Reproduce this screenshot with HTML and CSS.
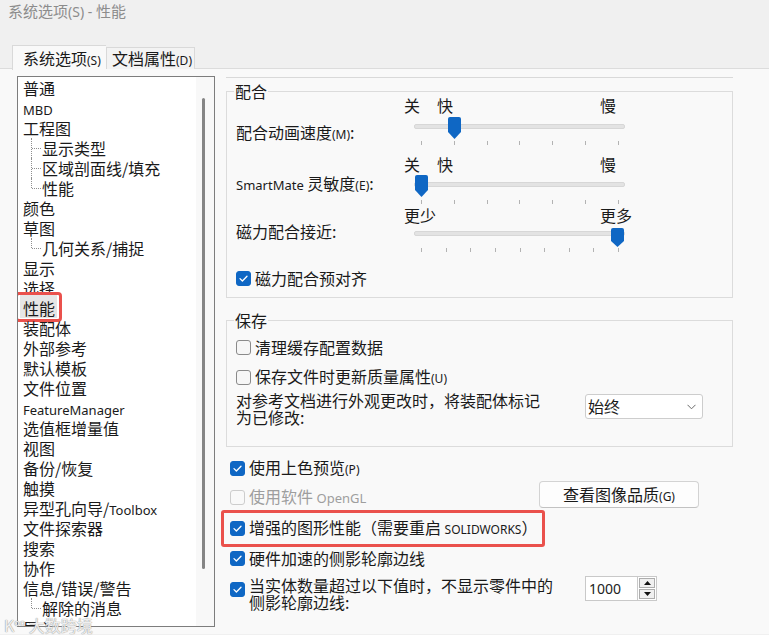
FILE: index.html
```html
<!DOCTYPE html>
<html lang="zh-CN">
<head>
<meta charset="utf-8">
<title>系统选项(S) - 性能</title>
<link rel="stylesheet" href="styles.css">
</head>
<body>
<div class="title">系统选项<span class="tl">(S) - </span>性能</div>
<div class="tabs">
  <div class="tab active">系统选项<span class="acc">(S)</span></div>
  <div class="tab">文档属性<span class="acc">(D)</span></div>
</div>
<div class="page">
  <div class="tree">
    <ul class="tree-list">
      <li class="item">普通</li>
      <li class="item"><span class="lt">MBD</span></li>
      <li class="item">工程图</li>
      <li class="item child">显示类型</li>
      <li class="item child">区域剖面线/填充</li>
      <li class="item child last">性能</li>
      <li class="item">颜色</li>
      <li class="item">草图</li>
      <li class="item child last">几何关系/捕捉</li>
      <li class="item">显示</li>
      <li class="item">选择</li>
      <li class="item"><span class="selected">性能</span></li>
      <li class="item">装配体</li>
      <li class="item">外部参考</li>
      <li class="item">默认模板</li>
      <li class="item">文件位置</li>
      <li class="item"><span class="lt">FeatureManager</span></li>
      <li class="item">选值框增量值</li>
      <li class="item">视图</li>
      <li class="item">备份/恢复</li>
      <li class="item">触摸</li>
      <li class="item">异型孔向导/<span class="lt">Toolbox</span></li>
      <li class="item">文件探索器</li>
      <li class="item">搜索</li>
      <li class="item">协作</li>
      <li class="item">信息/错误/警告</li>
      <li class="item child last">解除的消息</li>
      <li class="item">导入</li>
    </ul>
    <div class="scrollbar"><div class="sthumb"></div></div>
  </div>

  <div class="content">
    <div class="topline"></div>

    <div class="group group-mate">
      <div class="legend">配合</div>

      <div class="srow">
        <div class="srow-label lbl-1">配合动画速度<span class="acc">(M)</span>:</div>
        <div class="slider">
          <div class="slabels"><span>关</span><span class="fast">快</span><span class="slow">慢</span></div>
          <div class="strack-wrap w1">
            <div class="track"></div>
            <svg class="thumb t1" width="13" height="22" viewBox="0 0 13 22"><path d="M2 0H11A2 2 0 0 1 13 2V15L6.5 22L0 15V2A2 2 0 0 1 2 0Z"/></svg>
          </div>
          <div class="ticks t7"><i></i><i></i><i></i><i></i><i></i><i></i><i></i></div>
        </div>
      </div>

      <div class="srow r2">
        <div class="srow-label lbl-2"><span class="lt">SmartMate</span> 灵敏度<span class="acc">(E)</span>:</div>
        <div class="slider">
          <div class="slabels"><span>关</span><span class="fast">快</span><span class="slow">慢</span></div>
          <div class="strack-wrap w2">
            <div class="track"></div>
            <svg class="thumb t2" width="13" height="22" viewBox="0 0 13 22"><path d="M2 0H11A2 2 0 0 1 13 2V15L6.5 22L0 15V2A2 2 0 0 1 2 0Z"/></svg>
          </div>
          <div class="ticks t7 k2"><i></i><i></i><i></i><i></i><i></i><i></i><i></i></div>
        </div>
      </div>

      <div class="srow r3">
        <div class="srow-label lbl-3">磁力配合接近:</div>
        <div class="slider">
          <div class="slabels spread"><span>更少</span><span>更多</span></div>
          <div class="strack-wrap w3">
            <div class="track"></div>
            <svg class="thumb t3" width="13" height="19" viewBox="0 0 13 19"><path d="M2 0H11A2 2 0 0 1 13 2V13L6.5 19L0 13V2A2 2 0 0 1 2 0Z"/></svg>
          </div>
          <div class="ticks"><i></i><i></i><i></i><i></i><i></i><i></i><i></i><i></i><i></i></div>
        </div>
      </div>

      <div class="check-row mate-check">
        <span class="cb checked"><svg width="15" height="15" viewBox="0 0 15 15"><path d="M4 7.6L6.4 10L11 5.2"/></svg></span>
        <span>磁力配合预对齐</span>
      </div>
    </div>

    <div class="group group-save">
      <div class="legend">保存</div>
      <div class="check-row">
        <span class="cb"></span>
        <span>清理缓存配置数据</span>
      </div>
      <div class="check-row save-2">
        <span class="cb"></span>
        <span>保存文件时更新质量属性<span class="acc">(U)</span></span>
      </div>
      <div class="mod-row">
        <div class="mod-label">对参考文档进行外观更改时，将装配体标记<br>为已修改:</div>
        <div class="select"><span>始终</span><svg width="9" height="6" viewBox="0 0 9 6"><path d="M0.5 0.8L4.5 4.8L8.5 0.8"/></svg></div>
      </div>
    </div>

    <div class="opts">
      <div class="check-row opt-1">
        <span class="cb checked"><svg width="15" height="15" viewBox="0 0 15 15"><path d="M4 7.6L6.4 10L11 5.2"/></svg></span>
        <span>使用上色预览<span class="acc">(P)</span></span>
      </div>
      <div class="gl-row">
        <div class="check-row disabled gl-check">
          <span class="cb"></span>
          <span>使用软件 <span class="lt">OpenGL</span></span>
        </div>
        <div class="button">查看图像品质<span class="acc">(G)</span></div>
      </div>
      <div class="mark-box">
        <div class="check-row">
          <span class="cb checked"><svg width="15" height="15" viewBox="0 0 15 15"><path d="M4 7.6L6.4 10L11 5.2"/></svg></span>
          <span>增强的图形性能（需要重启 <span class="lt sm">SOLIDWORKS</span>）</span>
        </div>
      </div>
      <div class="check-row opt-hw">
        <span class="cb checked"><svg width="15" height="15" viewBox="0 0 15 15"><path d="M4 7.6L6.4 10L11 5.2"/></svg></span>
        <span>硬件加速的侧影轮廓边线</span>
      </div>
      <div class="count-row">
        <span class="cb checked"><svg width="15" height="15" viewBox="0 0 15 15"><path d="M4 7.6L6.4 10L11 5.2"/></svg></span>
        <div class="count-label">当实体数量超过以下值时，不显示零件中的<br>侧影轮廓边线:</div>
        <div class="spin">
          <div class="spin-input">1000</div>
          <div class="spin-btns">
            <div class="spin-btn"><svg width="7" height="4" viewBox="0 0 7 4"><path d="M3.5 0L7 4H0Z"/></svg></div>
            <div class="spin-btn"><svg width="7" height="4" viewBox="0 0 7 4"><path d="M0 0H7L3.5 4Z"/></svg></div>
          </div>
        </div>
      </div>
    </div>
  </div>
</div>
<div class="watermark">K<sup>oo</sup> 大数跨境</div>
</body>
</html>
```

FILE: styles.css
```css
* { box-sizing: border-box; }
html, body { margin: 0; padding: 0; }
body {
  width: 769px;
  height: 635px;
  overflow: hidden;
  position: relative;
  background: #f0f0f0;
  font-family: "Noto Sans CJK SC", "Noto Sans", sans-serif;
  font-size: 16px;
  color: #1a1a1a;
}
.lt { font-family: "Noto Sans", "Noto Sans CJK SC", sans-serif; font-size: 13px; }
.lt.sm { font-size: 12px; }
.acc { font-family: "Noto Sans", "Noto Sans CJK SC", sans-serif; font-size: 12px; }

.title {
  height: 22px;
  line-height: 22px;
  padding-left: 8px;
  color: #8c8c8c;
  font-size: 15px;
}
.title .tl { font-family: "Noto Sans", sans-serif; font-size: 14px; }

.tabs {
  display: flex;
  align-items: flex-start;
  margin-top: 23px;
  padding-left: 12px;
  height: 24px;
  margin-bottom: -1px;
  position: relative;
  z-index: 1;
}
.tab {
  height: 22px;
  margin-top: 2px;
  line-height: 21px;
  border: 1px solid #d9d9d9;
  border-bottom: none;
  background: #f3f3f3;
  padding-left: 5px;
  width: 89px;
  white-space: nowrap;
}
.tab.active {
  margin-top: 0;
  height: 25px;
  line-height: 24px;
  width: 94px;
  padding-left: 10px;
  background: #f9f9f9;
  border-right: none;
}

.page {
  height: 566px;
  background: #f9f9f9;
  border-top: 1px solid #dcdcdc;
  display: flex;
  align-items: flex-start;
  padding: 7px 0 0 17px;
}

/* tree */
.tree {
  width: 198px;
  height: 551px;
  border: 1px solid #7d7d7d;
  background: #fff;
  display: flex;
  overflow: hidden;
}
.tree-list {
  list-style: none;
  margin: 0;
  padding: 1px 0 0 5px;
  flex: 1;
}
.item {
  height: 20px;
  line-height: 20px;
  white-space: nowrap;
  position: relative;
}
.item.child { padding-left: 19px; }
.item.child::before {
  content: "";
  position: absolute;
  left: 8px;
  top: 0;
  bottom: 0;
  border-left: 1px dotted #8f8f8f;
}
.item.child.last::before { bottom: 50%; }
.item.child::after {
  content: "";
  position: absolute;
  left: 9px;
  top: 50%;
  width: 9px;
  border-top: 1px dotted #8f8f8f;
}
.selected {
  display: inline-block;
  vertical-align: top;
  position: relative;
  margin: -3px 0 0 -3px;
  padding: 3px 2px 0 3px;
  height: 23px;
  line-height: 20px;
  background: #e6e6e6;
}
.selected::after {
  content: "";
  position: absolute;
  left: -5px;
  right: -5px;
  top: -3px;
  bottom: -4px;
  border: 3px solid #ea514c;
  border-radius: 4px;
}
.scrollbar {
  width: 18px;
  background: #f8f8f8;
}
.sthumb {
  width: 3px;
  height: 471px;
  margin: 21px 0 0 6px;
  background: #858585;
  border-radius: 2px;
}

/* content */
.content {
  width: 519px;
  margin-left: 6px;
}
.topline {
  margin: 1px 0 0 5px;
  width: 507px;
  border-top: 1px solid #d9d9d9;
}
.group {
  margin-left: 5px;
  width: 507px;
  border: 1px solid #dcdcdc;
  position: relative;
  padding-left: 9px;
}
.legend {
  position: absolute;
  top: -11px;
  left: 7px;
  padding: 0 1px;
  line-height: 20px;
  background: #f9f9f9;
}
.group-mate {
  margin-top: 13px;
  padding-top: 3px;
  padding-bottom: 9px;
}
.srow { display: flex; align-items: flex-start; }
.srow.r2 { margin-top: 9px; }
.srow.r3 { margin-top: 1px; }
.srow-label { width: 168px; line-height: 20px; white-space: nowrap; }
.lbl-1 { margin-top: 27px; }
.lbl-2 { margin-top: 19px; }
.lbl-3 { margin-top: 16px; }

.slider { width: 228px; }
.slabels {
  display: flex;
  height: 20px;
  line-height: 20px;
}
.slabels .fast { margin-left: 17px; }
.slabels .slow { margin-left: auto; margin-right: 16px; }
.slabels.spread { justify-content: space-between; }
.strack-wrap { height: 18px; position: relative; }
.w1 { margin-top: 3px; }
.w2 { margin-top: 2px; }
.w3 { margin-top: 0; }
.track {
  position: absolute;
  left: 10px;
  top: 6px;
  width: 211px;
  height: 5px;
  background: #e3e3e3;
  border: 1px solid #d7d7d7;
  border-radius: 2px;
}
.thumb { position: absolute; fill: #0f67c4; }
.t1 { left: 44px; top: -1px; }
.t2 { left: 11px; top: -1px; }
.t3 { left: 207px; top: 3px; }
.ticks {
  display: flex;
  justify-content: space-between;
  margin: 5px 0 0 17px;
  width: 198px;
  height: 4px;
}
.ticks.k2 { margin-top: 6px; }
.ticks i { width: 1px; height: 100%; background: #b3b3b3; }

.check-row {
  display: flex;
  align-items: center;
  gap: 4px;
  height: 20px;
  line-height: 20px;
  white-space: nowrap;
}
.cb {
  flex: none;
  width: 15px;
  height: 15px;
  border: 1px solid #8a8a8a;
  border-radius: 3px;
  background: #f6f6f6;
  display: block;
}
.cb svg { display: block; margin: -1px; }
.cb svg path { fill: none; stroke: #fff; stroke-width: 1.3; stroke-linecap: round; stroke-linejoin: round; }
.cb.checked { background: #0f67c4; border-color: #0f67c4; }
.disabled { color: #9e9e9e; }
.disabled .cb { border-color: #cdcdcd; background: #f9f9f9; }

.mate-check { margin-top: 16px; }

.group-save {
  margin-top: 22px;
  padding-top: 16px;
  padding-bottom: 20px;
}
.save-2 { margin-top: 10px; }
.mod-row {
  display: flex;
  align-items: flex-start;
  margin-top: 5px;
}
.mod-label {
  width: 349px;
  line-height: 17px;
  white-space: nowrap;
}
.select {
  width: 118px;
  height: 25px;
  margin-top: 2px;
  border: 1px solid #cdcdcd;
  border-radius: 3px;
  background: #fff;
  padding: 0 6px 0 2px;
  line-height: 23px;
  display: flex;
  align-items: center;
  justify-content: space-between;
}
.select svg path { fill: none; stroke: #6a6a6a; stroke-width: 1; }

.opts { margin-left: 9px; }
.opt-1 { margin-top: 11px; }
.gl-row {
  display: flex;
  align-items: flex-start;
  margin-top: 3px;
  height: 27px;
}
.gl-check { width: 309px; margin-top: 6px; }
.button {
  width: 160px;
  height: 27px;
  border: 1px solid #d3d3d3;
  border-bottom-color: #c2c2c2;
  border-radius: 4px;
  background: #fdfdfd;
  text-align: center;
  line-height: 25px;
  white-space: nowrap;
}
.mark-box {
  margin: 2px 0 0 -9px;
  width: 324px;
  height: 37px;
  border: 3px solid #ea514c;
  border-radius: 3px;
  padding: 5px 0 0 6px;
}
.opt-hw { margin-top: 1px; }
.count-row {
  display: flex;
  align-items: flex-start;
  margin-top: 9px;
}
.count-row .cb { margin-top: 5px; }
.count-label {
  width: 336px;
  margin-left: 4px;
  line-height: 17px;
  white-space: nowrap;
}
.spin {
  display: flex;
  margin-top: -1px;
  height: 25px;
}
.spin-input {
  width: 52px;
  height: 25px;
  border: 1px solid #c9c9c9;
  border-right: none;
  background: #fff;
  font-family: "Noto Sans", sans-serif;
  font-size: 14px;
  line-height: 23px;
  padding-left: 3px;
  color: #222;
}
.spin-btns {
  width: 20px;
  height: 25px;
  border: 1px solid #c9c9c9;
  background: #fff;
  padding: 1px;
  display: flex;
  flex-direction: column;
  gap: 1px;
}
.spin-btn {
  flex: 1;
  border: 1px solid #adadad;
  background: #f0f0f0;
  display: flex;
  align-items: center;
  justify-content: center;
}
.spin-btn svg { display: block; fill: #111; }

.watermark {
  position: absolute;
  left: 4px;
  bottom: 0;
  font-size: 16px;
  line-height: 20px;
  color: rgba(255, 255, 255, 0.85);
  text-shadow: 0 0 1px #9a9a9a, 0 0 1px #9a9a9a;
  white-space: nowrap;
}
.watermark sup { font-size: 9px; }
```
